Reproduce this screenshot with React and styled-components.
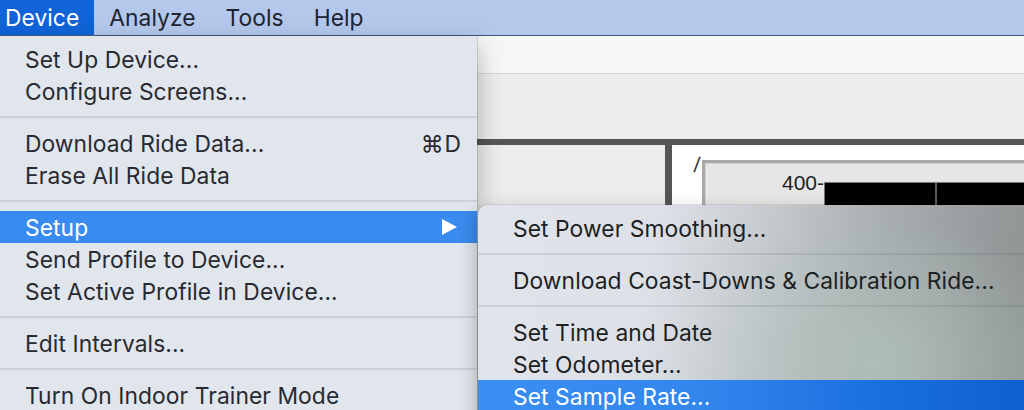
import React from "react";
import styled, { createGlobalStyle } from "styled-components";

const GlobalStyle = createGlobalStyle`
  html, body { margin: 0; padding: 0; overflow: hidden; background: #ececec; }
  body { font-family: Inter, "Liberation Sans", "DejaVu Sans", sans-serif; }
`;

const FONT = `Inter, "Liberation Sans", "DejaVu Sans", sans-serif`;

const Screen = styled.div`
  position: relative;
  width: 1024px;
  height: 410px;
  overflow: hidden;
  display: flex;
  flex-direction: column;
  font-family: ${FONT};
`;

const MenuBar = styled.div`
  display: flex;
  align-items: stretch;
  height: 35px;
  flex: none;
  background: #b3c8eb;
  border-bottom: 1px solid #42557f;
`;

const MenuTitle = styled.div`
  display: flex;
  align-items: center;
  padding: 0 15px;
  margin-left: ${(p) => (p.$first ? "-10px" : "0")};
  font-size: 22.8px;
  letter-spacing: 0.05px;
  color: ${(p) => (p.$active ? "#ffffff" : "#1e2430")};
  background: ${(p) => (p.$active ? "#1064d8" : "transparent")};
`;

const Window = styled.div`
  flex: 1;
  display: flex;
  flex-direction: column;
  background: #ececec;
`;

const TitleStrip = styled.div`
  height: 37px;
  flex: none;
  background: #f6f6f6;
  border-bottom: 1px solid #d6d6d6;
`;

const Toolbar = styled.div`
  height: 65px;
  flex: none;
  background: #ececec;
`;

const Rule = styled.div`
  height: 6px;
  flex: none;
  background: #565656;
`;

const Body = styled.div`
  flex: 1;
  display: flex;
`;

const SidePane = styled.div`
  width: 665px;
  flex: none;
  background: #ececec;
`;

const Divider = styled.div`
  width: 7px;
  flex: none;
  background: #565656;
`;

const Content = styled.div`
  flex: 1;
  background: #ffffff;
  display: flex;
  align-items: flex-start;
  padding: 10px 0 0 22px;
`;

const Slash = styled.span`
  width: 8px;
  font-family: "Liberation Sans", sans-serif;
  font-size: 21px;
  line-height: 20px;
  color: #333;
  transform: skewX(-6deg);
`;

const ChartFrame = styled.div`
  margin-top: 5px;
  flex: 1;
  height: 300px;
  display: flex;
  align-items: flex-start;
  padding-top: 19px;
  background: #e6e6e6;
  border-style: solid;
  border-width: 3px 0 0 3px;
  border-color: #a8a8a8;
  box-shadow: inset 1px 1px 0 #d2d2d2;
`;

const AxisLabel = styled.div`
  width: 119px;
  flex: none;
  margin-top: -8px;
  text-align: right;
  font-family: "Liberation Sans", sans-serif;
  font-size: 21px;
  line-height: 18px;
  color: #222;
`;

const Plot = styled.div`
  flex: 1;
  height: 280px;
  background: #000;
  border-top: 1px solid #777;
  border-left: 1px solid #777;
  display: flex;
`;

const GridLine = styled.div`
  margin-left: 110px;
  width: 2px;
  background: #5a5a5a;
`;

const Dropdown = styled.div`
  position: absolute;
  left: -10px;
  top: 36px;
  width: 487px;
  height: 420px;
  padding-top: 7px;
  box-sizing: border-box;
  background: #e1e5ec;
  box-shadow: 1px 0 0 rgba(0, 0, 0, 0.12), 0 10px 24px rgba(0, 0, 0, 0.28);
  display: flex;
  flex-direction: column;
`;

const SubMenu = styled.div`
  position: absolute;
  left: 478px;
  top: 205px;
  width: 620px;
  height: 240px;
  padding-top: 7px;
  box-sizing: border-box;
  border-radius: 10px 0 0 0;
  overflow: hidden;
  background:
    radial-gradient(ellipse 190px 150px at 400px 160px, rgba(178, 196, 186, 0.75), rgba(178, 196, 186, 0) 100%),
    linear-gradient(100deg, #e0e4eb 0%, #dde1e7 28%, #c4c9ce 45%, #a7adb1 62%, #939999 80%, #8a928f 100%);
  box-shadow: 0 0 0 1px rgba(0, 0, 0, 0.08), -2px 6px 18px rgba(0, 0, 0, 0.25);
  display: flex;
  flex-direction: column;
`;

const Item = styled.div`
  height: 32px;
  flex: none;
  display: flex;
  align-items: center;
  padding: 0 ${(p) => p.$pr || 15}px 0 35px;
  font-size: 22.8px;
  letter-spacing: 0.08px;
  color: ${(p) => (p.$active ? "#ffffff" : p.$dark ? "#1c1f23" : "#272a30")};
  background: ${(p) =>
    p.$active
      ? p.$grad
        ? "linear-gradient(90deg, #3b8ef1 0%, #3287ee 35%, #1a6fdf 65%, #0658c9 100%)"
        : "#3a8bef"
      : "transparent"};
`;

const Label = styled.span`
  flex: 1;
  white-space: nowrap;
`;

const Shortcut = styled.span`
  font-size: 22.8px;
  color: #272a30;
  letter-spacing: 1px;
`;

const Separator = styled.div`
  height: 20px;
  flex: none;
  display: flex;
  align-items: center;
  &::after {
    content: "";
    display: block;
    width: 100%;
    height: 2px;
    background: ${(p) => (p.$sub ? "rgba(40, 50, 60, 0.1)" : "#cdd0d6")};
  }
`;

const Arrow = () => (
  <svg width="16" height="16" viewBox="0 0 16 16">
    <polygon points="1,0 16,8 1,16" fill="#ffffff" />
  </svg>
);

export default function App() {
  return (
    <>
      <GlobalStyle />
      <Screen>
        <MenuBar>
          <MenuTitle $first $active>Device</MenuTitle>
          <MenuTitle>Analyze</MenuTitle>
          <MenuTitle>Tools</MenuTitle>
          <MenuTitle>Help</MenuTitle>
        </MenuBar>
        <Window>
          <TitleStrip />
          <Toolbar />
          <Rule />
          <Body>
            <SidePane />
            <Divider />
            <Content>
              <Slash>/</Slash>
              <ChartFrame>
                <AxisLabel>400-</AxisLabel>
                <Plot>
                  <GridLine />
                </Plot>
              </ChartFrame>
            </Content>
          </Body>
        </Window>

        <Dropdown>
          <Item><Label>Set Up Device...</Label></Item>
          <Item><Label>Configure Screens...</Label></Item>
          <Separator />
          <Item><Label>Download Ride Data...</Label><Shortcut>⌘D</Shortcut></Item>
          <Item><Label>Erase All Ride Data</Label></Item>
          <Separator />
          <Item $active $pr={20}><Label>Setup</Label><Arrow /></Item>
          <Item><Label>Send Profile to Device...</Label></Item>
          <Item><Label>Set Active Profile in Device...</Label></Item>
          <Separator />
          <Item><Label>Edit Intervals...</Label></Item>
          <Separator />
          <Item><Label>Turn On Indoor Trainer Mode</Label></Item>
        </Dropdown>

        <SubMenu>
          <Item $dark><Label>Set Power Smoothing...</Label></Item>
          <Separator $sub />
          <Item $dark><Label>Download Coast-Downs &amp; Calibration Ride...</Label></Item>
          <Separator $sub />
          <Item $dark><Label>Set Time and Date</Label></Item>
          <Item $dark><Label>Set Odometer...</Label></Item>
          <Item $active $grad><Label>Set Sample Rate...</Label></Item>
        </SubMenu>
      </Screen>
    </>
  );
}
